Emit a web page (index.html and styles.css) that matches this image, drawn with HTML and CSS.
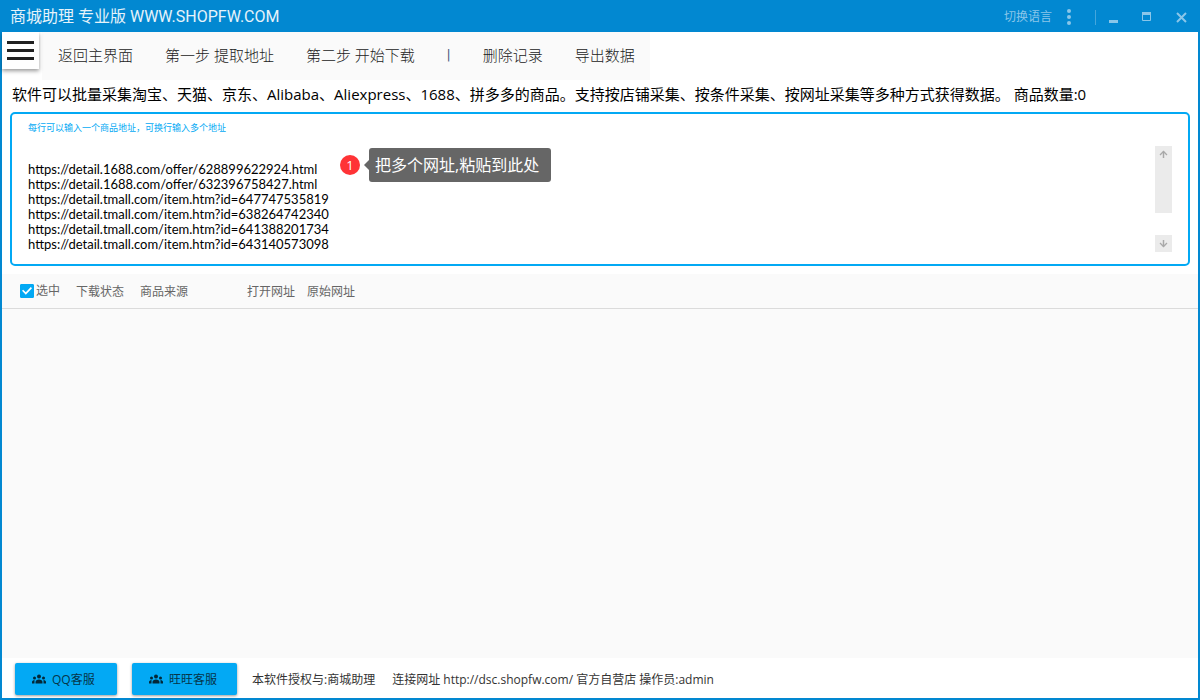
FILE: index.html
```
<!DOCTYPE html>
<html lang="zh-CN">
<head>
<meta charset="utf-8">
<meta name="viewport" content="width=device-width, initial-scale=1">
<title>商城助理 专业版</title>
<link rel="stylesheet" href="styles.css">
</head>
<body>
<div class="window">
  <header class="titlebar">
    <h1 class="titlebar-name">商城助理 专业版 WWW.SHOPFW.COM</h1>
    <button class="language" type="button">切换语言
      <svg width="4" height="16" viewBox="0 0 4 16" fill="currentColor" aria-hidden="true"><circle cx="2" cy="2" r="2"/><circle cx="2" cy="8" r="2"/><circle cx="2" cy="14" r="2"/></svg>
    </button>
    <span class="titlebar-divider"></span>
    <div class="window-controls">
      <button class="window-button" type="button" aria-label="最小化"><svg width="11" height="11" viewBox="0 0 11 11" aria-hidden="true"><path d="M1 8h9v3H1z" fill="currentColor"/></svg></button>
      <button class="window-button" type="button" aria-label="最大化"><svg width="11" height="11" viewBox="0 0 11 11" aria-hidden="true"><path d="M.5 1.500h8v7h-8z" fill="none" stroke="currentColor"/><path d="M0 0h9v3H0z" fill="currentColor"/></svg></button>
      <button class="window-button" type="button" aria-label="关闭"><svg width="11" height="11" viewBox="0 0 11 11" aria-hidden="true"><path d="M1 1l9 9M10 1l-9 9" stroke="currentColor" stroke-width="2"/></svg></button>
    </div>
  </header>

  <div class="toolbar">
    <button class="menu-button" type="button" aria-label="菜单"><svg width="27" height="19" viewBox="0 0 27 19" fill="#212121" aria-hidden="true"><path d="M0 0h27v3H0zM0 8h27v3H0zM0 16h27v3H0z"/></svg></button>
    <nav class="tabs">
      <button class="tab" type="button">返回主界面</button>
      <button class="tab" type="button">第一步 提取地址</button>
      <button class="tab" type="button">第二步 开始下载</button>
      <span class="tab-separator">|</span>
      <button class="tab" type="button">删除记录</button>
      <button class="tab" type="button">导出数据</button>
    </nav>
  </div>

  <p class="summary">软件可以批量采集淘宝、天猫、京东、Alibaba、Aliexpress、1688、拼多多的商品。支持按店铺采集、按条件采集、按网址采集等多种方式获得数据。 商品数量:0</p>

  <section class="address-box">
    <label class="address-label" for="addresses">每行可以输入一个商品地址，可换行输入多个地址</label>
    <div class="address-body">
      <textarea class="address-input" id="addresses" rows="6" spellcheck="false">https://detail.1688.com/offer/628899622924.html
https://detail.1688.com/offer/632396758427.html
https://detail.tmall.com/item.htm?id=647747535819
https://detail.tmall.com/item.htm?id=638264742340
https://detail.tmall.com/item.htm?id=641388201734
https://detail.tmall.com/item.htm?id=643140573098</textarea>
      <div class="scroller">
        <button class="scroller-up" type="button" aria-label="向上滚动"><svg width="9" height="9" viewBox="0 0 9 9" fill="none" stroke="currentColor" aria-hidden="true"><path d="M4.500 8V1.500" stroke-width="1.500"/><path d="M1 5l3.500-3.500L8 5" stroke-width="1.300"/></svg></button>
        <button class="scroller-down" type="button" aria-label="向下滚动"><svg width="9" height="9" viewBox="0 0 9 9" fill="none" stroke="currentColor" aria-hidden="true"><path d="M4.500 1v6.500" stroke-width="1.500"/><path d="M1 4l3.500 3.500L8 4" stroke-width="1.300"/></svg></button>
      </div>
    </div>
    <div class="hint"><span class="hint-number">1</span><span class="hint-text">把多个网址,粘贴到此处</span></div>
  </section>

  <main class="results">
    <table class="results-table">
      <thead>
        <tr>
          <th class="col-select"><label class="select-all"><input class="select-all-box" type="checkbox" checked>选中</label></th>
          <th class="col-status">下载状态</th>
          <th class="col-source">商品来源</th>
          <th class="col-open">打开网址</th>
          <th>原始网址</th>
        </tr>
      </thead>
    </table>
  </main>

  <footer class="footer">
    <button class="service" type="button"><svg class="service-icon" width="14" height="10" viewBox="0 0 28 20" fill="currentColor" aria-hidden="true"><circle cx="14" cy="5" r="4"/><circle cx="5" cy="8" r="3"/><circle cx="23" cy="8" r="3"/><path d="M7 19v-3c0-3 3-5 7-5s7 2 7 5v3zM0 19v-3c0-2 2-4 5-4v7zM28 19v-3c0-2-2-4-5-4v7z"/></svg>QQ客服</button>
    <button class="service" type="button"><svg class="service-icon" width="14" height="10" viewBox="0 0 28 20" fill="currentColor" aria-hidden="true"><circle cx="14" cy="5" r="4"/><circle cx="5" cy="8" r="3"/><circle cx="23" cy="8" r="3"/><path d="M7 19v-3c0-3 3-5 7-5s7 2 7 5v3zM0 19v-3c0-2 2-4 5-4v7zM28 19v-3c0-2-2-4-5-4v7z"/></svg>旺旺客服</button>
    <span class="license">本软件授权与:商城助理</span>
    <span class="connection">连接网址 http://dsc.shopfw.com/ 官方自营店 操作员:admin</span>
  </footer>
</div>
</body>
</html>
```

FILE: styles.css
```
* { box-sizing: border-box; }

body {
  margin: 0;
  font-family: "Open Sans", "Noto Sans CJK SC", sans-serif;
  font-size: 12px;
  color: #000;
}

button {
  border: 0;
  padding: 0;
  background: none;
  font: inherit;
  color: inherit;
  cursor: pointer;
}

svg { display: block; }

.window {
  display: flex;
  flex-direction: column;
  min-height: 100vh;
  border: 2px solid #0288d1;
  border-top: 0;
  background: #fff;
}

.titlebar {
  display: flex;
  align-items: center;
  height: 32px;
  padding: 2px 0 0 8px;
  background: #0288d1;
  color: #8ac6e9;
}

.titlebar-name {
  flex: 1;
  margin: 0;
  font-family: Roboto, "Noto Sans CJK SC", sans-serif;
  font-size: 16px;
  font-weight: 400;
  line-height: 30px;
  color: #e6f3fa;
}

.language {
  display: flex;
  align-items: center;
  gap: 15px;
  line-height: 30px;
}

.titlebar-divider {
  width: 1px;
  height: 15px;
  margin-left: 24px;
  background: #45a6dc;
}

.window-controls {
  display: flex;
}

.window-button {
  display: grid;
  place-items: center;
  width: 34px;
  height: 30px;
}

.toolbar {
  display: flex;
  align-items: flex-start;
}

.menu-button {
  display: grid;
  place-items: center;
  width: 37px;
  height: 37px;
  background: #fff;
  box-shadow: 0 2px 4px rgba(0, 0, 0, 0.4);
  clip-path: inset(0 -6px -8px -6px);
}

.tabs {
  display: flex;
  align-items: center;
  gap: 32px;
  height: 48px;
  margin-left: 3px;
  padding: 0 15px 4px 16px;
  background: #fafafa;
  font-size: 15px;
  font-weight: 300;
  color: #222;
}

.tab { white-space: nowrap; }

.tab-separator {
  width: 4px;
  padding-top: 2px;
  font-family: Roboto, sans-serif;
  font-weight: 400;
  line-height: 20px;
  color: #4a5a80;
}

.summary {
  margin: 0;
  padding: 3px 10px 7px;
  font-size: 15px;
  line-height: 22px;
}

.address-box {
  position: relative;
  margin: 0 8px;
  padding: 6px 16px 12px;
  border: 2px solid #03a9f4;
  border-radius: 5px;
}

.address-label {
  display: block;
  font-size: 9px;
  line-height: 16px;
  color: #03a9f4;
}

.address-body {
  display: flex;
  margin-top: 10px;
}

.address-input {
  flex: 1;
  min-width: 0;
  height: 106px;
  padding: 16px 0 0;
  border: 0;
  outline: 0;
  resize: none;
  overflow: hidden;
  background: transparent;
  font: 13px/15px Lato, "Noto Sans CJK SC", sans-serif;
  color: #000;
}

.scroller {
  display: flex;
  flex-direction: column;
  justify-content: space-between;
  width: 17px;
  color: #a8a8a8;
}

.scroller-up,
.scroller-down {
  display: flex;
  justify-content: center;
  padding-top: 4px;
  background: #ebebeb;
}

.scroller-up { height: 67px; }

.scroller-down { height: 17px; }

.hint {
  position: absolute;
  top: 34px;
  left: 328px;
  display: flex;
  align-items: center;
  gap: 9px;
  color: #fff;
}

.hint-number {
  width: 20px;
  border-radius: 50%;
  background: #ff3336;
  font-size: 13px;
  line-height: 20px;
  text-align: center;
}

.hint-text {
  position: relative;
  padding: 0 12px 0 6px;
  border-radius: 3px;
  background: #666;
  font-size: 16px;
  line-height: 34px;
}

.hint-text::before {
  content: "";
  position: absolute;
  top: 12px;
  left: -5px;
  border: 5px solid transparent;
  border-left: 0;
  border-right-color: #666;
}

.results {
  flex: 1;
  margin-top: 8px;
  background: #fafafa;
}

.results-table {
  width: 100%;
  table-layout: fixed;
  border-collapse: collapse;
  color: #666;
}

.results-table th {
  height: 34px;
  padding: 2px 0 0;
  border-bottom: 1px solid #dbdbdb;
  font-weight: 400;
  line-height: 16px;
  text-align: left;
}

.results-table .col-select {
  width: 74px;
  padding: 0 0 0 18px;
}

.col-status { width: 64px; }
.col-source { width: 107px; }
.col-open { width: 60px; }

.select-all {
  display: flex;
  align-items: center;
  gap: 2px;
}

.select-all-box {
  display: grid;
  place-items: center;
  width: 14px;
  height: 14px;
  margin: 0;
  appearance: none;
  border: 1px solid #03a9f4;
  border-radius: 1px;
  background: #fff;
}

.select-all-box:checked { background: #03a9f4; }

.select-all-box:checked::before {
  content: "";
  width: 10px;
  height: 8px;
  background: #fff;
  clip-path: polygon(0 50%, 12% 36%, 38% 68%, 88% 4%, 100% 18%, 38% 100%);
}

.footer {
  display: flex;
  align-items: center;
  height: 40px;
  padding: 2px 13px 0;
  color: #333;
}

.service {
  display: flex;
  align-items: center;
  gap: 6px;
  min-width: 102px;
  height: 32px;
  margin-right: 15px;
  padding: 0 20px 0 17px;
  border-radius: 2px;
  background: #03a9f4;
  box-shadow: 0 1px 3px rgba(0, 0, 0, 0.4);
  color: #06354a;
}

.service-icon { color: #032838; }

.license { margin-right: 17px; }
```
